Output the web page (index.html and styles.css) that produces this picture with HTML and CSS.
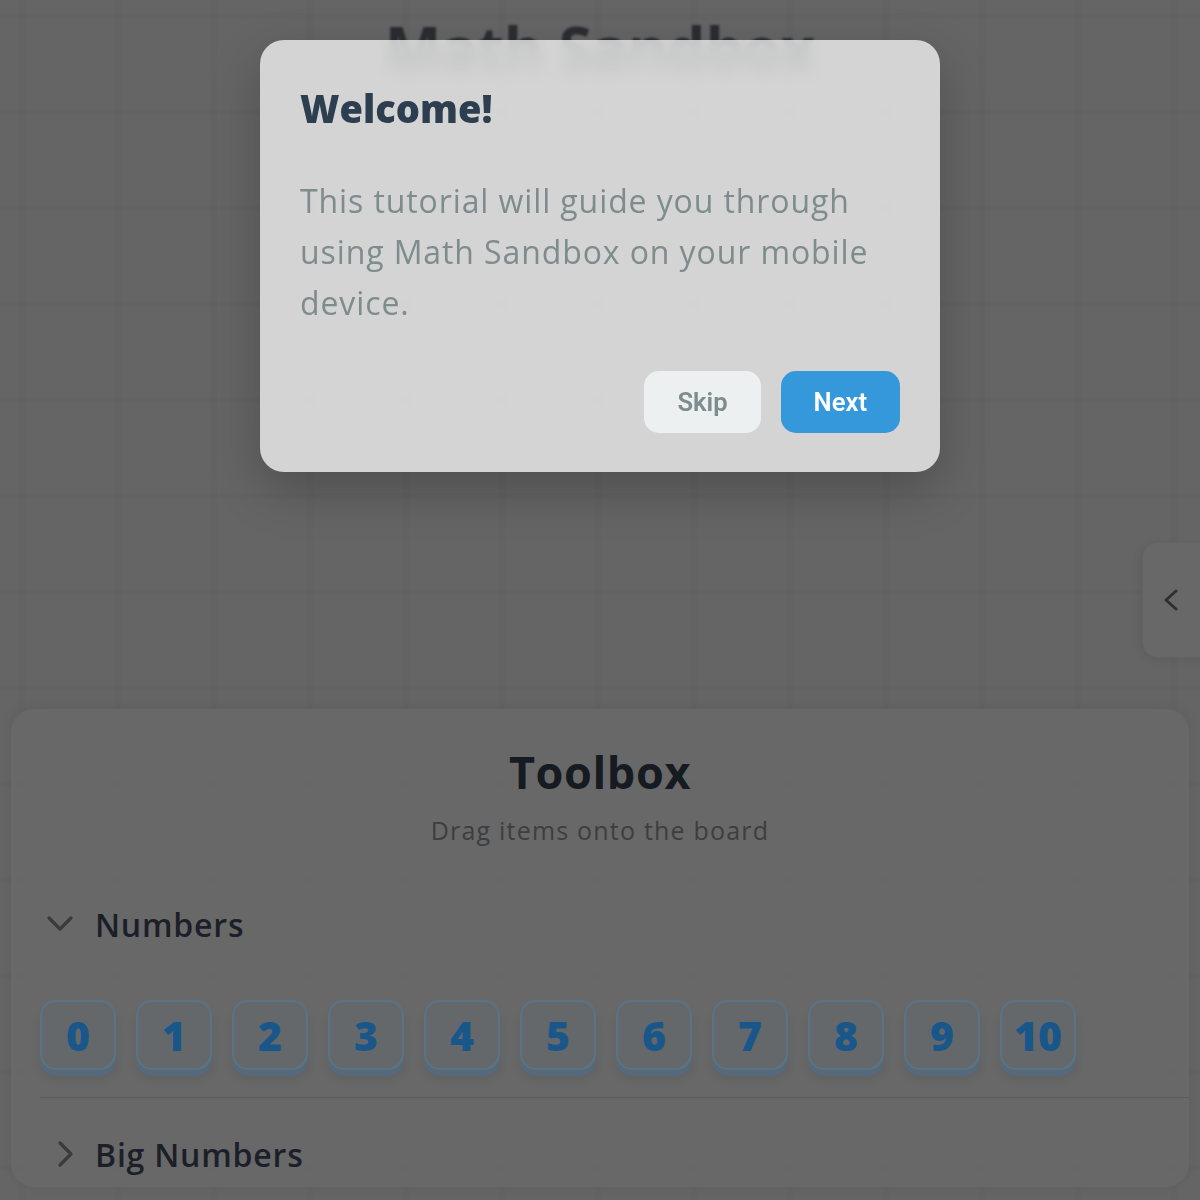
FILE: index.html
```html
<!DOCTYPE html>
<html lang="en">
<head>
<meta charset="utf-8">
<title>Math Sandbox</title>
<link rel="stylesheet" href="styles.css">
</head>
<body>
<div class="app">
  <header class="top">
    <h1 class="app-title">Math Sandbox</h1>
  </header>
  <main class="board">
    <button class="side-tab" aria-label="Open panel">
      <svg width="16" height="22" viewBox="0 0 16 22"><polyline points="13 2 3 11 13 20" fill="none" stroke="currentColor" stroke-width="3" stroke-linecap="round" stroke-linejoin="round"/></svg>
    </button>
  </main>
  <section class="toolbox">
    <h2 class="toolbox-title">Toolbox</h2>
    <p class="toolbox-sub">Drag items onto the board</p>
    <div class="category">
      <div class="cat-head">
        <span class="cat-icon"><svg class="chev-down" width="28" height="18" viewBox="0 0 28 18"><polyline points="3 3 14 14 25 3" fill="none" stroke="currentColor" stroke-width="3.2" stroke-linecap="round" stroke-linejoin="round"/></svg></span>
        <span class="cat-name">Numbers</span>
      </div>
      <div class="tiles">
        <div class="tile">0</div>
        <div class="tile">1</div>
        <div class="tile">2</div>
        <div class="tile">3</div>
        <div class="tile">4</div>
        <div class="tile">5</div>
        <div class="tile">6</div>
        <div class="tile">7</div>
        <div class="tile">8</div>
        <div class="tile">9</div>
        <div class="tile">10</div>
      </div>
    </div>
    <div class="category collapsed">
      <div class="cat-head">
        <span class="cat-icon"><svg class="chev-right" width="18" height="28" viewBox="0 0 18 28"><polyline points="3 3 14 14 3 25" fill="none" stroke="currentColor" stroke-width="3.2" stroke-linecap="round" stroke-linejoin="round"/></svg></span>
        <span class="cat-name">Big Numbers</span>
      </div>
    </div>
  </section>

  <div class="modal" role="dialog">
    <h2 class="modal-title">Welcome!</h2>
    <p class="modal-text">This tutorial will guide you through using Math Sandbox on your mobile device.</p>
    <div class="modal-actions">
      <button class="btn btn-skip">Skip</button>
      <button class="btn btn-next">Next</button>
    </div>
  </div>
</div>
</body>
</html>
```
FILE: styles.css
```css
* { box-sizing: border-box; }
html, body { margin: 0; padding: 0; }
body {
  font-family: "Open Sans", "DejaVu Sans", sans-serif;
  background: #646566;
}
.app {
  position: relative;
  width: 1200px;
  height: 1200px;
  overflow: hidden;
  display: flex;
  flex-direction: column;
  background-color: #656566;
  background-image:
    linear-gradient(90deg, rgba(0,0,0,0.018) 0 6px, transparent 6px),
    linear-gradient(0deg, rgba(0,0,0,0.018) 0 6px, transparent 6px);
  background-size: 96px 96px;
  background-position: 19px 19px;
}
.top {
  padding-top: 12px;
  text-align: center;
}
.app-title {
  margin: 0;
  font-size: 60px;
  line-height: 72px;
  font-weight: 700;
  color: #2a2d31;
  filter: blur(1.2px);
}
.board {
  flex: 1;
  position: relative;
}
.side-tab {
  position: absolute;
  right: -20px;
  top: 458px;
  width: 78px;
  height: 116px;
  padding: 0 0 0 20px;
  display: flex;
  align-items: center;
  justify-content: flex-start;
  background: #686868;
  border: 1px solid rgba(0,0,0,0.04);
  border-radius: 16px 0 0 16px;
  box-shadow: -2px 2px 8px rgba(0,0,0,0.08);
  color: #2f3032;
}
.toolbox {
  height: 480px;
  margin: 0 10px 12px;
  padding-top: 36px;
  background: rgba(106,106,106,0.75);
  border: 1px solid rgba(0,0,0,0.06);
  border-radius: 24px;
  box-shadow: 0 -2px 12px rgba(0,0,0,0.06);
  overflow: hidden;
  text-align: center;
}
.toolbox-title {
  margin: 0;
  font-size: 45px;
  line-height: 53px;
  font-weight: 700;
  letter-spacing: 0.6px;
  color: #161b21;
}
.toolbox-sub {
  margin: 14px 0 0;
  font-size: 25px;
  line-height: 36px;
  font-weight: 400;
  letter-spacing: 1.2px;
  color: #3c3e40;
}
.category {
  margin-left: 29px;
  text-align: left;
}
.category:first-of-type { margin-top: 52px; }
.cat-head {
  display: flex;
  align-items: center;
  height: 48px;
}
.cat-icon {
  width: 55px;
  display: flex;
  align-items: center;
  color: #3a3b3c;
}
.chev-down { margin-left: 6px; }
.chev-right { margin-left: 17px; }
.cat-name {
  font-size: 32px;
  font-weight: 600;
  letter-spacing: 0.8px;
  color: #1b2028;
}
.tiles {
  display: flex;
  gap: 20px;
  margin-top: 52px;
  padding-bottom: 27px;
}
.tile {
  width: 76px;
  height: 70px;
  display: flex;
  align-items: center;
  justify-content: center;
  background: #64686b;
  border: 2px solid #5a7385;
  border-radius: 16px;
  box-shadow: 0 6px 0 #55697a, 0 9px 10px rgba(0,0,0,0.08);
  font-size: 41px;
  font-weight: 800;
  color: #19578a;
}
.collapsed {
  border-top: 1px solid #5b5c5d;
  padding-top: 32px;
}
.modal {
  position: absolute;
  left: 260px;
  top: 40px;
  width: 680px;
  height: 432px;
  padding: 40px;
  background: rgba(255,255,255,0.72);
  -webkit-backdrop-filter: blur(8px);
  backdrop-filter: blur(8px);
  border-radius: 24px;
  box-shadow: 0 18px 50px rgba(0,0,0,0.22);
}
.modal-title {
  margin: 0;
  font-size: 38px;
  line-height: 57px;
  font-weight: 800;
  color: #2c3e50;
}
.modal-text {
  margin: 38px 0 0;
  font-size: 32px;
  line-height: 51.2px;
  font-weight: 400;
  letter-spacing: 0.9px;
  color: #7f8c8d;
}
.modal-actions {
  display: flex;
  justify-content: flex-end;
  gap: 20px;
  margin-top: 42px;
}
.btn {
  height: 62px;
  padding: 0 32px;
  border: none;
  border-radius: 15px;
  font-family: Roboto, "Liberation Sans", sans-serif;
  font-size: 25.6px;
  font-weight: 600;
}
.btn-skip { background: #ecf0f1; color: #7f8c8d; padding: 0 33px; }
.btn-next { background: #3498db; color: #ffffff; padding: 0 33px; }
```
